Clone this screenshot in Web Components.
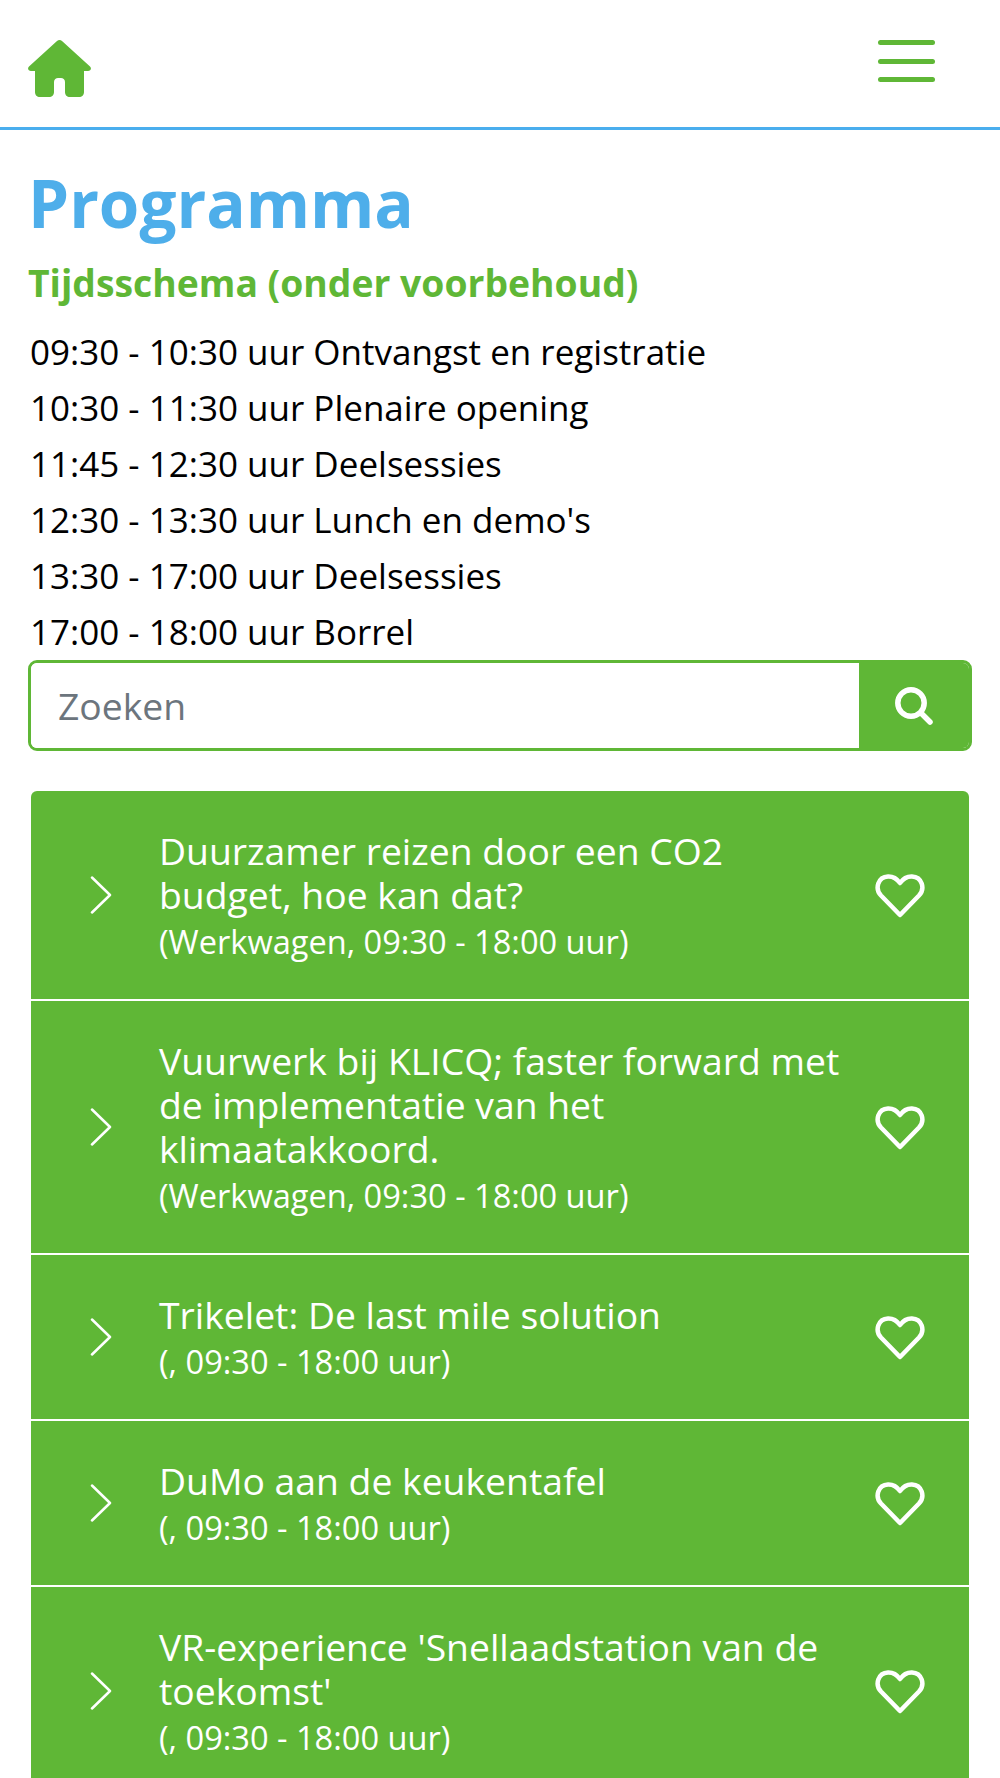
<!DOCTYPE html>
<html lang="nl">
<head>
<meta charset="utf-8">
<title>Programma</title>
<style>
   html, body { margin: 0; padding: 0; background: #fff; overflow: hidden; }
   body { font-family: "Open Sans", sans-serif; color: #000; }
</style>
</head>
<body>
<site-header></site-header>
<page-intro heading="Programma" subheading="Tijdsschema (onder voorbehoud)">
   <span>09:30 - 10:30 uur Ontvangst en registratie</span>
   <span>10:30 - 11:30 uur Plenaire opening</span>
   <span>11:45 - 12:30 uur Deelsessies</span>
   <span>12:30 - 13:30 uur Lunch en demo's</span>
   <span>13:30 - 17:00 uur Deelsessies</span>
   <span>17:00 - 18:00 uur Borrel</span>
</page-intro>
<search-box placeholder="Zoeken"></search-box>
<session-list>
   <session-row meta="(Werkwagen, 09:30 - 18:00 uur)">Duurzamer reizen door een CO2 budget, hoe kan dat?</session-row>
   <session-row meta="(Werkwagen, 09:30 - 18:00 uur)">Vuurwerk bij KLICQ; faster forward met de implementatie van het klimaatakkoord.</session-row>
   <session-row meta="(, 09:30 - 18:00 uur)">Trikelet: De last mile solution</session-row>
   <session-row meta="(, 09:30 - 18:00 uur)">DuMo aan de keukentafel</session-row>
   <session-row meta="(, 09:30 - 18:00 uur)">VR-experience 'Snellaadstation van de toekomst'</session-row>
</session-list>

<script>
class SiteHeader extends HTMLElement {
   constructor() {
      super();
      const shadowRoot = this.attachShadow({ mode: 'open' });
      shadowRoot.innerHTML = `
         <style>
            :host {
               display: flex;
               justify-content: space-between;
               align-items: flex-start;
               height: 127px;
               border-bottom: 3px solid #4aaeee;
            }
            .home { display: block; margin: 40px 0 0 28px; }
            .menu {
               display: flex;
               flex-direction: column;
               gap: 13.700px;
               width: 57px;
               margin: 40px 65px 0 0;
            }
            .menu span {
               display: block;
               height: 5px;
               background: #5fb736;
               border-radius: 2.500px;
            }
         </style>
         <svg class="home" width="63" height="57" viewBox="0 0 63 57">
            <path fill="#5fb736" d="M29 1 1 26.500C-1 28.500 .5 31 3 31H7V52C7 55 9 57 12 57H21C24 57 26 55 26 52V42C26 39.500 28 38 30 38H33C35 38 37 39.500 37 42V52C37 55 39 57 42 57H51C54 57 56 55 56 52V31H60C62.500 31 64 28.500 62 26.500L34 1C32.500-.3 30.500-.3 29 1Z"/>
         </svg>
         <div class="menu"><span></span><span></span><span></span></div>
      `;
   }
}

class PageIntro extends HTMLElement {
   constructor() {
      super();
      const shadowRoot = this.attachShadow({ mode: 'open' });
      shadowRoot.innerHTML = `
         <style>
            :host { display: block; padding: 0 28px 0.500px; }
            h1 {
               margin: 0;
               padding: 29px 0 0 0;
               font-size: 65.500px;
               line-height: 88px;
               font-weight: 700;
               color: #4eaeea;
            }
            h2 {
               margin: 0;
               padding: 13px 0 0 0;
               font-size: 37.300px;
               line-height: 46px;
               font-weight: 700;
               color: #5fb736;
            }
            .times {
               display: grid;
               grid-auto-rows: 56px;
               align-items: center;
               padding: 17.500px 0 0 2px;
               font-size: 35px;
            }
         </style>
         <h1></h1>
         <h2></h2>
         <div class="times"><slot></slot></div>
      `;
      shadowRoot.querySelector('h1').textContent = this.getAttribute('heading');
      shadowRoot.querySelector('h2').textContent = this.getAttribute('subheading');
   }
}

class SearchBox extends HTMLElement {
   constructor() {
      super();
      const shadowRoot = this.attachShadow({ mode: 'open' });
      shadowRoot.innerHTML = `
         <style>
            :host {
               display: flex;
               height: 91px;
               margin: 0 28px;
               box-sizing: border-box;
               border: 3px solid #5fb736;
               border-radius: 9px;
               overflow: hidden;
            }
            input {
               flex: 1;
               min-width: 0;
               border: 0;
               outline: 0;
               padding: 0 0 0 27px;
               font: 37.300px "Open Sans", sans-serif;
               background: #fff;
            }
            input::placeholder { color: #6c757d; opacity: 1; }
            button {
               display: flex;
               align-items: center;
               justify-content: center;
               width: 110px;
               border: 0;
               padding: 0;
               background: #5fb736;
            }
         </style>
         <input type="text">
         <button type="button" aria-label="Zoeken">
            <svg width="38" height="38" viewBox="0 0 38 38" fill="none" stroke="#fff" stroke-width="5.500" stroke-linecap="round">
               <circle cx="16" cy="16" r="13.200"/>
               <path d="M26 26 35 35"/>
            </svg>
         </button>
      `;
      shadowRoot.querySelector('input').placeholder = this.getAttribute('placeholder');
   }
}

class SessionList extends HTMLElement {
   constructor() {
      super();
      const shadowRoot = this.attachShadow({ mode: 'open' });
      shadowRoot.innerHTML = `
         <style>
            :host {
               display: flex;
               flex-direction: column;
               gap: 2px;
               margin: 40px 31px 0;
               border-radius: 6px 6px 0 0;
               overflow: hidden;
            }
         </style>
         <slot></slot>
      `;
   }
}

class SessionRow extends HTMLElement {
   constructor() {
      super();
      const shadowRoot = this.attachShadow({ mode: 'open' });
      shadowRoot.innerHTML = `
         <style>
            :host {
               display: flex;
               align-items: center;
               padding: 38px 44px 35px 59px;
               background: #5fb736;
               color: #fff;
            }
            .chevron { flex: none; margin: 0 47px 3px 0; }
            .text { flex: 1; min-width: 0; margin-right: 20px; }
            .title { font-size: 37.300px; line-height: 44px; }
            .meta { font-size: 32.600px; line-height: 44px; padding-top: 3px; }
            .heart { flex: none; margin-bottom: 2px; }
         </style>
         <svg class="chevron" width="22" height="38" viewBox="0 0 22 38" fill="none" stroke="#fff" stroke-width="2.500" stroke-linecap="round" stroke-linejoin="round">
            <path d="M2 1.500 20 19 2 36.500"/>
         </svg>
         <div class="text">
            <div class="title"><slot></slot></div>
            <div class="meta"></div>
         </div>
         <svg class="heart" width="50" height="44" viewBox="0 0 50 44" fill="none" stroke="#fff" stroke-width="4.500" stroke-linejoin="round">
            <path d="M25 41 6 21.500C-.5 14.500 3 3 13 2.500 18 2.300 22 4.800 25 9 28 4.800 32 2.300 37 2.500 47 3 50.500 14.500 44 21.500Z"/>
         </svg>
      `;
      shadowRoot.querySelector('.meta').textContent = this.getAttribute('meta');
   }
}

customElements.define('site-header', SiteHeader);
customElements.define('page-intro', PageIntro);
customElements.define('search-box', SearchBox);
customElements.define('session-list', SessionList);
customElements.define('session-row', SessionRow);
</script>
</body>
</html>
